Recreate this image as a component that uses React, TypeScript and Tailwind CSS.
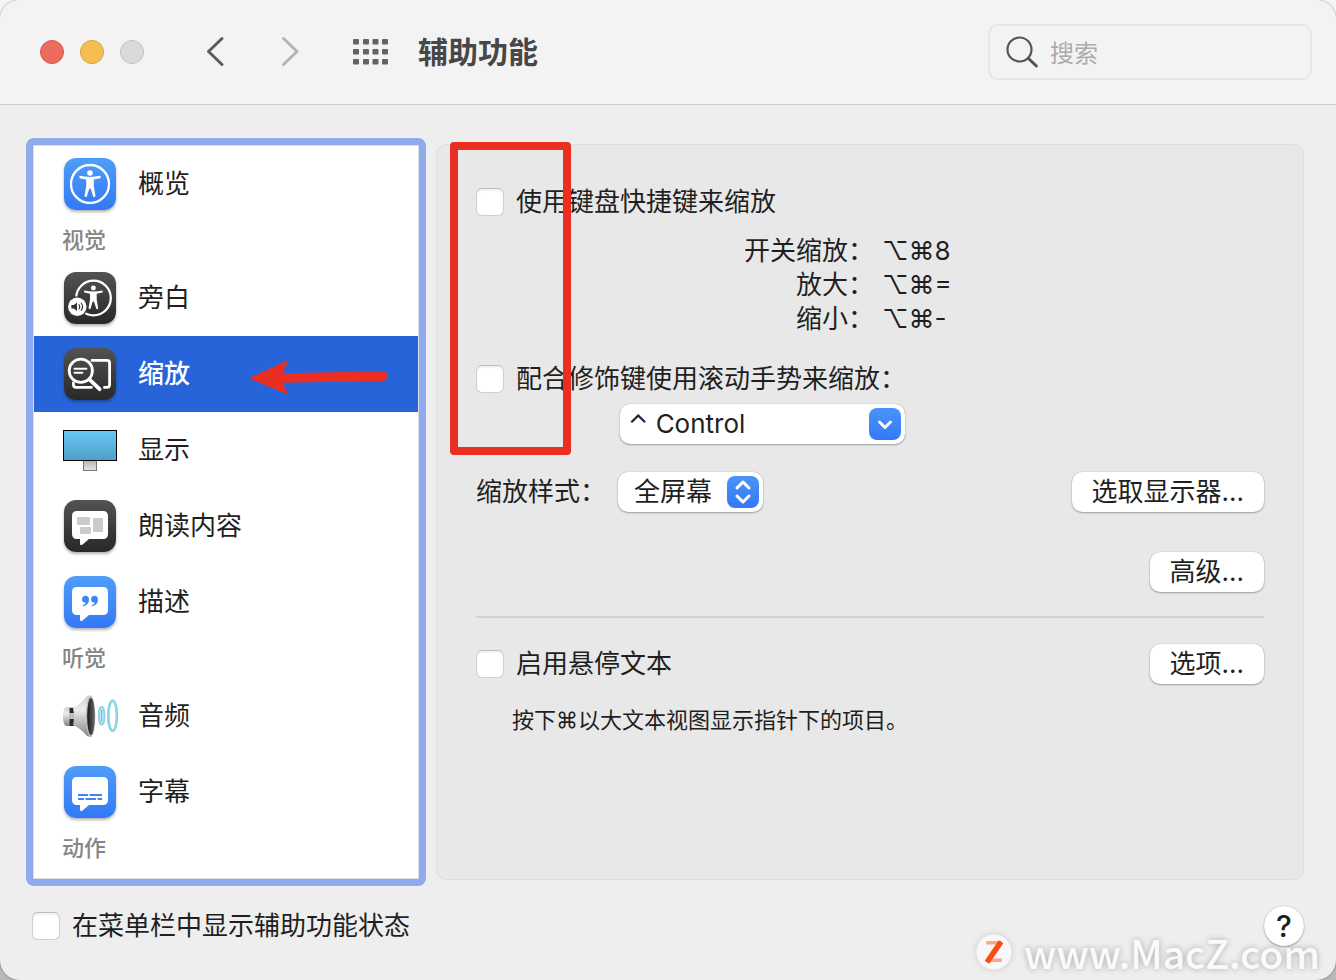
import { useState, type ReactNode } from "react";
import clsx from "clsx";

const Person = () => (
  <>
    <circle cx="26" cy="15" r="2.8" />
    <path d="M15.8 17.8Q26 20 36.2 17.8Q37.4 19.2 36.2 20.2L29.8 21.6V28L31.5 38Q30.4 39.8 29.2 38.4L26.7 30.4H25.3L22.8 38.4Q21.6 39.8 20.5 38L22.2 28V21.6L15.8 20.2Q14.6 19.2 15.8 17.8Z" />
  </>
);

const Bubble = () => (
  <path
    d="M13 11H39Q44 11 44 16V34Q44 39 39 39H25L18.6 44.6Q16 46 16 43.6V39H13Q8 39 8 34V16Q8 11 13 11Z"
    fill="#fff"
  />
);

function Tile({ dark, children }: { dark?: boolean; children: ReactNode }) {
  return (
    <span
      className={clsx(
        "size-13 rounded-xl bg-linear-to-b shadow-[0_2px_3px_rgba(0,0,0,0.3)]",
        dark ? "from-[#525452] to-[#282828]" : "from-[#509df8] to-[#3478f6]"
      )}
    >
      <svg viewBox="0 0 52 52" className="size-13" fill="none" strokeLinecap="round" strokeLinejoin="round">
        {children}
      </svg>
    </span>
  );
}

const OverviewIcon = () => (
  <Tile>
    <circle cx="26" cy="26" r="19" stroke="#fff" strokeWidth="2.3" />
    <g fill="#fff">
      <Person />
    </g>
  </Tile>
);

const VoiceOverIcon = () => (
  <Tile dark>
    <circle cx="29.5" cy="26" r="17.3" stroke="#fff" strokeWidth="2.3" />
    <g fill="#fff" transform="translate(6.5 2.8) scale(0.88)">
      <Person />
    </g>
    <circle cx="13.3" cy="34.7" r="10.5" fill="#393a39" />
    <circle cx="13.3" cy="34.7" r="9.2" fill="#fff" />
    <path d="M7.4 33H9.8L13 30.4V39L9.8 36.4H7.4Z" fill="#333" />
    <path d="M15 32.6Q16.6 34.7 15 36.8M17.2 31Q20 34.7 17.2 38.4" stroke="#333" strokeWidth="1.1" />
  </Tile>
);

const ZoomIcon = () => (
  <Tile dark>
    <g stroke="#fff" strokeWidth="2.8">
      <circle cx="16.8" cy="22.7" r="11.6" />
      <path d="M10.5 20.7H22.4M10.5 24.8H18.4" strokeWidth="2" />
      <path d="M25.6 31.6L35.6 41.2" strokeWidth="3.8" />
      <path d="M28 12.4H43Q45.6 12.4 45.6 15.2V36.6Q45.6 39.4 43 39.4H40.4" />
      <path d="M9.4 35V36.6Q9.4 39.4 12 39.4H27.4" />
    </g>
  </Tile>
);

const DisplayIcon = () => (
  <svg viewBox="0 0 56 52" className="w-14 h-13">
    <defs>
      <linearGradient id="screen" x1="0" y1="0" x2="0" y2="1">
        <stop offset="0" stopColor="#67c8f5" />
        <stop offset="1" stopColor="#4f9fc8" />
      </linearGradient>
      <linearGradient id="stand" x1="0" y1="0" x2="0" y2="1">
        <stop offset="0" stopColor="#b4b4b4" />
        <stop offset="1" stopColor="#e4e4e4" />
      </linearGradient>
    </defs>
    <rect x="21.5" y="36.5" width="13" height="10" fill="url(#stand)" stroke="#777" />
    <rect x="1.5" y="6.5" width="53" height="30" fill="url(#screen)" stroke="#000" />
  </svg>
);

const SpokenIcon = () => (
  <Tile dark>
    <Bubble />
    <g fill="#cbcbcb">
      <rect x="13" y="17" width="13" height="8" rx="1" />
      <rect x="16" y="27" width="11" height="7" rx="1" />
      <rect x="29" y="18" width="10" height="14" rx="1" />
    </g>
  </Tile>
);

const DescriptionIcon = () => (
  <Tile>
    <Bubble />
    <g fill="#3f87f6">
      <path d="M21.4 19.8C23.6 19.8 25 21.4 25 23.7C25 26.8 22.8 29.4 19.6 30.1C18.6 30.2 18.4 29.2 19.3 28.8C20.8 28.2 21.6 27.5 21.8 26.7C19.6 26.9 18 25.3 18 23.2C18 21.3 19.5 19.8 21.4 19.8Z" />
      <path d="M30.4 19.8C32.6 19.8 34 21.4 34 23.7C34 26.8 31.8 29.4 28.6 30.1C27.6 30.2 27.4 29.2 28.3 28.8C29.8 28.2 30.6 27.5 30.8 26.7C28.6 26.9 27 25.3 27 23.2C27 21.3 28.5 19.8 30.4 19.8Z" />
    </g>
  </Tile>
);

const AudioIcon = () => (
  <svg viewBox="0 0 56 46" className="w-14 h-[46px]" fill="none">
    <defs>
      <linearGradient id="cone" x1="0" y1="0" x2="0" y2="1">
        <stop offset="0" stopColor="#cfcfcf" />
        <stop offset="0.35" stopColor="#ececec" />
        <stop offset="1" stopColor="#858585" />
      </linearGradient>
      <linearGradient id="mouth" x1="0" y1="0" x2="1" y2="0">
        <stop offset="0" stopColor="#161616" />
        <stop offset="1" stopColor="#6d6d6d" />
      </linearGradient>
    </defs>
    <path d="M4 14H13V33H4Q1 32 1 23.5Q1 15 4 14Z" fill="url(#cone)" />
    <path d="M7.5 15H12V33H7.5Z" fill="#2b2b2b" />
    <path d="M7 20H12V26H7Z" fill="#bdbdbd" />
    <path d="M11 15Q18 12 24 4Q27 1 30 3V43Q27 45 24 42Q18 35 11 32Q13 23 11 15Z" fill="url(#cone)" />
    <ellipse cx="28.6" cy="23.5" rx="4.8" ry="20.2" fill="#bcbcbc" />
    <ellipse cx="29" cy="23.5" rx="3.8" ry="18.6" fill="url(#mouth)" />
    <ellipse cx="39.6" cy="22.8" rx="2.8" ry="9" fill="#c9ecf4" stroke="#8ed3e6" strokeWidth="2" />
    <path d="M39.6 17V28.6" stroke="#5fb6cd" />
    <ellipse cx="50.6" cy="22.8" rx="4.2" ry="15" stroke="#98dbec" strokeWidth="2.8" />
    <ellipse cx="50.6" cy="22.8" rx="4.8" ry="15.6" stroke="#6fc6da" strokeWidth="0.6" />
  </svg>
);

const CaptionsIcon = () => (
  <Tile>
    <Bubble />
    <path d="M14 29H24M25.5 29H38M14 33H20M21.5 33H32M33.5 33H38" stroke="#3f83f6" strokeWidth="1.8" strokeLinecap="butt" />
  </Tile>
);

const sections = [
  { items: [{ name: "概览", icon: <OverviewIcon /> }] },
  {
    title: "视觉",
    items: [
      { name: "旁白", icon: <VoiceOverIcon /> },
      { name: "缩放", icon: <ZoomIcon /> },
      { name: "显示", icon: <DisplayIcon /> },
      { name: "朗读内容", icon: <SpokenIcon /> },
      { name: "描述", icon: <DescriptionIcon /> },
    ],
  },
  {
    title: "听觉",
    items: [
      { name: "音频", icon: <AudioIcon /> },
      { name: "字幕", icon: <CaptionsIcon /> },
    ],
  },
  { title: "动作", items: [] },
];

const shortcuts = [
  { label: "开关缩放：", keys: "⌥⌘8" },
  { label: "放大：", keys: "⌥⌘=" },
  { label: "缩小：", keys: "⌥⌘-" },
];

function Checkbox({ label }: { label: string }) {
  return (
    <label className="flex items-center gap-3">
      <input
        type="checkbox"
        className="size-7 shrink-0 appearance-none rounded-md border border-[#cfcfcf] border-t-[#bcbcbc] bg-white checked:bg-[#3478f6] shadow-[inset_0_2px_2px_rgba(0,0,0,0.06)]"
      />
      {label}
    </label>
  );
}

function PushButton({ children }: { children: ReactNode }) {
  return (
    <button className="h-10 px-5 rounded-[10px] bg-white shadow-[0_0_1px_rgba(0,0,0,0.3),0_1px_2px_rgba(0,0,0,0.3)]">
      {children}
    </button>
  );
}

interface SelectProps {
  label: string;
  options: string[];
  className: string;
  arrow: string;
}

function Select({ label, options, className, arrow }: SelectProps) {
  return (
    <div className="relative">
      <select
        aria-label={label}
        className={clsx(
          "block h-10 rounded-[10px] bg-white appearance-none shadow-[0_0_1px_rgba(0,0,0,0.3),0_1px_2px_rgba(0,0,0,0.3)]",
          className
        )}
      >
        {options.map((o) => (
          <option key={o}>{o}</option>
        ))}
      </select>
      <span className="absolute right-1 top-1 size-8 rounded-lg bg-linear-to-b from-[#4a94f8] to-[#3478f6] pointer-events-none">
        <svg viewBox="0 0 32 32" className="size-8" fill="none" stroke="#fff" strokeWidth="3" strokeLinecap="round" strokeLinejoin="round">
          <path d={arrow} />
        </svg>
      </span>
    </div>
  );
}

function Toolbar() {
  return (
    <header className="flex items-center pl-10 pr-6 h-[105px] rounded-t-[20px] bg-[#f3f3f3] border-b border-[#c9c9c9]">
      <div className="flex gap-4">
        <button aria-label="关闭" className="size-6 rounded-full bg-[#ec6a5e] border border-[#d5564b]" />
        <button aria-label="最小化" className="size-6 rounded-full bg-[#f4bf4f] border border-[#d8a13c]" />
        <button aria-label="缩放窗口" className="size-6 rounded-full bg-[#dadada] border border-[#bfbfbf]" />
      </div>
      <div className="flex gap-11 ml-14">
        <button aria-label="后退" className="text-[#5c5c5c]">
          <svg viewBox="0 0 32 32" className="size-8" fill="none" stroke="currentColor" strokeWidth="3" strokeLinecap="round" strokeLinejoin="round">
            <path d="M22 2.5L8.5 15.5L22 28.5" />
          </svg>
        </button>
        <button aria-label="前进" className="text-[#b4b4b4]">
          <svg viewBox="0 0 32 32" className="size-8" fill="none" stroke="currentColor" strokeWidth="3" strokeLinecap="round" strokeLinejoin="round">
            <path d="M7.5 2.5L21 15.5L7.5 28.5" />
          </svg>
        </button>
      </div>
      <button aria-label="显示全部" className="ml-11">
        <svg viewBox="0 0 36 26" className="w-9 h-[26px]" fill="#636363">
          {[1, 11, 20.5, 30].map((x) =>
            [0, 10, 20].map((y) => <rect key={`${x}-${y}`} x={x} y={y} width="6" height="5.5" rx="1" />)
          )}
        </svg>
      </button>
      <h1 className="ml-7.5 text-[30px] leading-10 font-bold text-[#474747]">辅助功能</h1>
      <label className="ml-auto flex items-center gap-3 w-[324px] h-14 px-4 rounded-[10px] border-2 border-[#e6e6e6]">
        <svg viewBox="0 0 32 32" className="size-8 shrink-0" fill="none" stroke="#545454" strokeLinecap="round">
          <circle cx="13.5" cy="13.5" r="12" strokeWidth="2.2" />
          <path d="M22.5 22.5L30.3 30" strokeWidth="3" />
        </svg>
        <input
          type="text"
          aria-label="搜索"
          placeholder="搜索"
          className="min-w-0 flex-1 pt-1 bg-transparent text-2xl outline-none placeholder:text-[#ababab]"
        />
      </label>
    </header>
  );
}

function Sidebar() {
  const [selected, setSelected] = useState("缩放");

  return (
    <nav className="w-[400px] shrink-0 rounded-lg border-7 border-[#8fabec] bg-[#8fabec]">
      <div className="h-full border border-[#dcdfe0] bg-white pb-2.5">
        {sections.map((section, i) => (
          <section key={i}>
            {section.title && <h2 className="pl-7 text-[22px] leading-9 pb-0.5 font-medium text-[#868686]">{section.title}</h2>}
            {section.items.map((item) => (
              <button
                key={item.name}
                onClick={() => setSelected(item.name)}
                className={clsx(
                  "relative flex items-center gap-5 w-full h-19 pl-7 text-left",
                  item.name === selected && "bg-[#2764da] text-white font-medium"
                )}
              >
                <span className="flex justify-center w-14">{item.icon}</span>
                {item.name}
                {item.name === "缩放" && (
                  <svg viewBox="0 0 140 38" className="absolute left-[214px] top-[22px] w-[140px] h-[38px]" fill="#ea2f22">
                    <path d="M1 20.3L40 2L35 15.2L134.5 13.3A4.8 4.8 0 0 1 134.5 23L35 24.8L40 36.5Z" />
                  </svg>
                )}
              </button>
            ))}
          </section>
        ))}
      </div>
    </nav>
  );
}

function ZoomPanel() {
  return (
    <main className="relative flex-1 my-1.5 px-[39px] pt-10 rounded-[10px] border border-[#dedede] bg-[#e8e8e8]">
      <Checkbox label="使用键盘快捷键来缩放" />
      <dl className="mt-[15px] grid grid-cols-[398px_1fr] gap-x-2">
        {shortcuts.map((s) => (
          <div key={s.label} className="contents">
            <dt className="text-right">{s.label}</dt>
            <dd>{s.keys}</dd>
          </div>
        ))}
      </dl>
      <div className="mt-[26px]">
        <Checkbox label="配合修饰键使用滚动手势来缩放：" />
      </div>
      <div className="mt-2 ml-36 flex">
        <Select
          label="修饰键"
          options={["⌃ Control", "⌥ Option", "⌘ Command"]}
          className="w-[285px] px-2"
          arrow="M10.5 14L16 19.5L21.5 14"
        />
      </div>
      <div className="mt-7 flex items-center">
        <span className="w-[142px]">缩放样式：</span>
        <Select
          label="缩放样式"
          options={["全屏幕", "画中画"]}
          className="w-[145px] px-4"
          arrow="M10 12L16 6L22 12M10 20L16 26L22 20"
        />
        <div className="ml-auto">
          <PushButton>选取显示器...</PushButton>
        </div>
      </div>
      <div className="mt-10 flex justify-end">
        <PushButton>高级...</PushButton>
      </div>
      <hr className="mt-6 border-t-2 border-[#d1d1d1]" />
      <div className="mt-[26px] flex items-center justify-between">
        <Checkbox label="启用悬停文本" />
        <PushButton>选项...</PushButton>
      </div>
      <p className="mt-5 ml-9 text-[22px] leading-8">按下⌘以大文本视图显示指针下的项目。</p>
      <div className="absolute left-[13px] -top-[3px] w-[121px] h-[313px] rounded border-8 border-[#ea2f22] pointer-events-none" />
    </main>
  );
}

function Watermark() {
  return (
    <div className="absolute right-4 bottom-0 flex items-center gap-3 pointer-events-none">
      <svg viewBox="0 0 36 36" className="size-9 drop-shadow-[0_0_3px_rgba(0,0,0,0.15)]">
        <circle cx="18" cy="18" r="17.5" fill="#f8f8f8" />
        <text x="18" y="28" textAnchor="middle" fontSize="28" fontWeight="700" fill="#fba58c">
          Z
        </text>
        <path d="M12.5 26L23.5 10" stroke="#fb4c12" strokeWidth="5.5" strokeLinecap="square" />
      </svg>
      <span className="font-['Noto_Sans_CJK_SC',sans-serif] font-medium text-[39px] leading-[56px] text-[#fafafa] [text-shadow:0_0_6px_rgba(0,0,0,0.3)]">
        www.MacZ.com
      </span>
    </div>
  );
}

export default function App() {
  return (
    <div className="min-h-screen flex bg-linear-to-b from-[#f6f6f6] to-[#b8b8b8] font-[Inter,'Noto_Sans_CJK_SC','DejaVu_Sans',sans-serif] text-[26px] leading-[34px] text-[#1f1f1f]">
      <div className="relative flex-1 flex flex-col rounded-[20px] bg-[#eeeeee] shadow-[0_0_2px_rgba(0,0,0,0.5)]">
        <Toolbar />
        <div className="flex-1 flex gap-2.5 pl-[26px] pr-8 pt-[33px]">
          <Sidebar />
          <ZoomPanel />
        </div>
        <footer className="flex items-center justify-between px-8 pt-5 pb-[34px]">
          <Checkbox label="在菜单栏中显示辅助功能状态" />
          <button aria-label="帮助" className="size-10 rounded-full bg-white text-3xl font-medium shadow-[0_0_1px_rgba(0,0,0,0.3),0_1px_2px_rgba(0,0,0,0.3)]">
            ?
          </button>
        </footer>
        <Watermark />
      </div>
    </div>
  );
}
